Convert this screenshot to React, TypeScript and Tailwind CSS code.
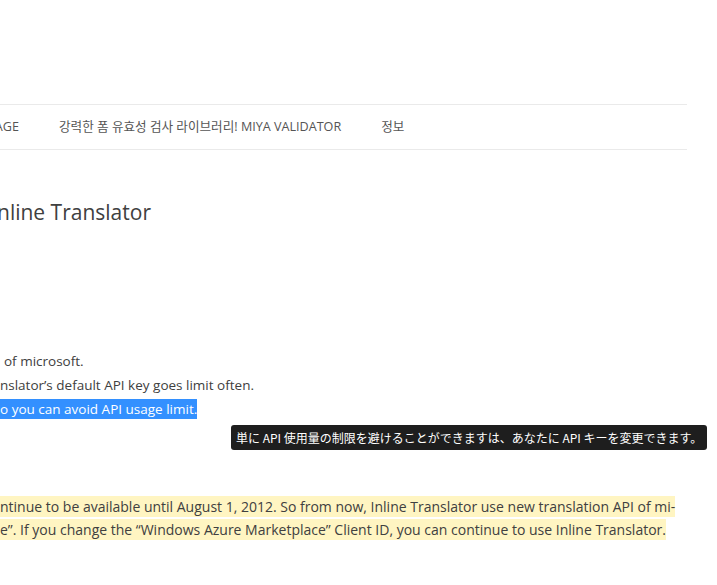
import React from 'react';

const navItems = ['강력한 폼 유효성 검사 라이브러리! MIYA VALIDATOR', '정보'];

export default function App() {
  return (
    <div className="relative w-[717px] h-[585px] overflow-hidden bg-white text-[#404040] font-['Open_Sans','Noto_Sans_CJK_KR',sans-serif]">
      <div className="h-[104px]" />

      {/* main navigation, clipped at the left edge */}
      <nav className="w-[687px] h-[46px] border-y border-[#eaeaea] flex items-center gap-10 text-[12.6px] uppercase text-[#555]">
        <span className="w-[19px] flex justify-end overflow-hidden whitespace-nowrap">Usage</span>
        {navItems.map((item) => (
          <span key={item} className="whitespace-nowrap">{item}</span>
        ))}
      </nav>

      <h1 className="mt-[47px] ml-[-3px] text-[21px] leading-[30px] text-[#404040] whitespace-nowrap">nline Translator</h1>

      <div className="mt-[122px] text-[13.5px] leading-6 whitespace-nowrap">
        <p className="pl-[4px]">of microsoft.</p>
        <p>nslator’s default API key goes limit often.</p>
        <p>
          <span className="bg-[#3390ff] text-white py-[1px] pl-[1px] ml-[-1px]">o you can avoid API usage limit.</span>
        </p>
      </div>

      <div className="mt-[74px] text-[14px] leading-[23px] whitespace-nowrap">
        <p>
          <span className="bg-[#fff5c2] py-[1px]">ntinue to be available until August 1, 2012. So from now, Inline Translator use new translation API of mi-</span>
        </p>
        <p>
          <span className="bg-[#fff5c2] py-[1px]">e”. If you change the “Windows Azure Marketplace” Client ID, you can continue to use Inline Translator.</span>
        </p>
      </div>

      {/* translation tooltip */}
      <div className="absolute left-[231px] top-[425px] h-[25px] px-[5px] flex items-center rounded-[3px] bg-[#1e1e1e] text-white text-[12px] whitespace-nowrap font-['Noto_Sans_CJK_JP',sans-serif]">
        単に API 使用量の制限を避けることができますは、あなたに API キーを変更できます。
      </div>
    </div>
  );
}
